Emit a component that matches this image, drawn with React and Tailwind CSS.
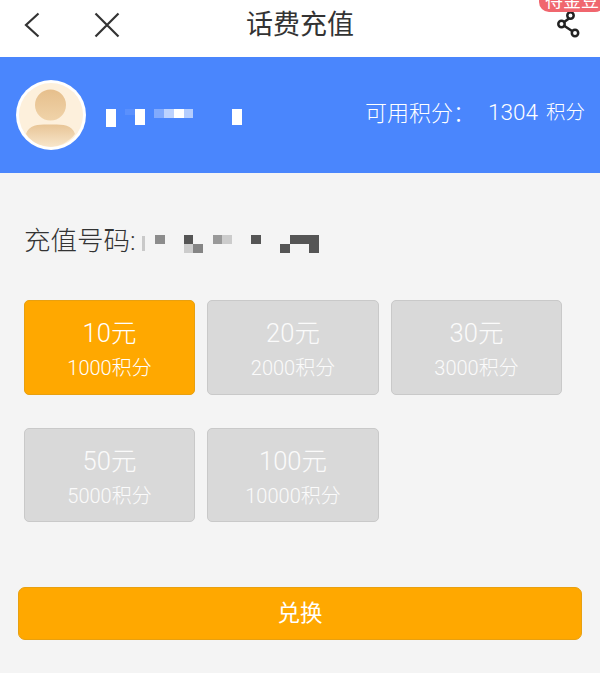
const font = { fontFamily: 'Roboto, "Noto Sans CJK SC", sans-serif' };

const options = [
    { price: '10元', points: '1000积分', active: true },
    { price: '20元', points: '2000积分' },
    { price: '30元', points: '3000积分' },
    { price: '50元', points: '5000积分' },
    { price: '100元', points: '10000积分' },
];

function BackIcon() {
    return (
        <svg width="16" height="26" viewBox="0 0 16 26" fill="none" stroke="#333" strokeWidth="2.200">
            <path d="M14.500 1.500 L2 13 L14.500 24.500" />
        </svg>
    );
}

function CloseIcon() {
    return (
        <svg width="26" height="26" viewBox="0 0 26 26" fill="none" stroke="#333" strokeWidth="2.200">
            <path d="M1.500 1.500 L24.500 24.500 M24.500 1.500 L1.500 24.500" />
        </svg>
    );
}

function Avatar() {
    return (
        <svg width="70" height="70" viewBox="0 0 70 70" className="shrink-0">
            <defs>
                <linearGradient id="head" x1="0" y1="0" x2="0" y2="1">
                    <stop offset="0" stopColor="#e6bf8c" />
                    <stop offset="1" stopColor="#f0d3a9" />
                </linearGradient>
                <linearGradient id="body" x1="0" y1="0" x2="0" y2="1">
                    <stop offset="0" stopColor="#e8c596" />
                    <stop offset="1" stopColor="#f8e6cb" />
                </linearGradient>
                <clipPath id="disc">
                    <circle cx="35" cy="35" r="32" />
                </clipPath>
            </defs>
            <circle cx="35" cy="35" r="35" fill="#fff" />
            <circle cx="35" cy="35" r="32" fill="#fdf0dc" />
            <circle cx="34.500" cy="25" r="15.500" fill="url(#head)" />
            <path d="M10 54 C13 44 24 44.500 34 44.500 C45 44.500 56 44 59 54 C52 63 42 67 34 67 C26 67 16 63 10 54Z" fill="url(#body)" clipPath="url(#disc)" />
        </svg>
    );
}

function NameMosaic() {
    return (
        <svg width="140" height="20" viewBox="0 0 140 20" className="ml-[20px] mt-[5px]">
            <rect x="0" y="1" width="10" height="18" fill="#fff" />
            <rect x="19" y="1" width="10" height="6" fill="#5a90fd" />
            <rect x="29" y="1" width="10" height="16" fill="#fff" />
            <rect x="48" y="1" width="10" height="9" fill="#81aafd" />
            <rect x="58" y="1" width="10" height="9" fill="#bcd2fe" />
            <rect x="68" y="1" width="10" height="9" fill="#fff" />
            <rect x="78" y="1" width="9" height="9" fill="#b4cdfe" />
            <rect x="126" y="1" width="10" height="16" fill="#fff" />
        </svg>
    );
}

function PhoneMosaic() {
    return (
        <svg width="180" height="20" viewBox="0 0 180 20" className="ml-[6px] mt-[6px]">
            <rect x="0" y="2" width="3" height="15" fill="#c9c9c9" />
            <rect x="13" y="1" width="10" height="9" fill="#8c8c8c" />
            <rect x="42" y="1" width="9" height="9" fill="#555" />
            <rect x="42" y="10" width="9" height="9" fill="#ccc" />
            <rect x="51" y="10" width="10" height="9" fill="#858585" />
            <rect x="71" y="1" width="9" height="9" fill="#999" />
            <rect x="80" y="1" width="10" height="9" fill="#ccc" />
            <rect x="109" y="1" width="10" height="9" fill="#555" />
            <rect x="138" y="10" width="10" height="9" fill="#555" />
            <rect x="148" y="1" width="29" height="9" fill="#555" />
            <rect x="167" y="10" width="10" height="9" fill="#555" />
        </svg>
    );
}

function ShareIcon() {
    return (
        <svg width="24" height="28" viewBox="0 0 24 28" fill="none" stroke="#222" strokeWidth="2.500">
            <path d="M15 6 L5.500 13 L19 22" />
            <circle cx="14.500" cy="4.500" r="3.200" fill="#fff" />
            <circle cx="5.500" cy="13" r="3.200" fill="#fff" />
            <circle cx="19" cy="22" r="3.200" fill="#fff" />
        </svg>
    );
}

function OptionCard({ price, points, active }) {
    return (
        <div
            className={`flex h-[94.5px] flex-col items-center rounded-[5px] border pt-[14px] font-light ${
                active
                    ? 'border-[#e8a010] bg-[#ffa800] text-white'
                    : 'border-[#c9c9c9] bg-[#d9d9d9] text-[#fbfbfb]'
            }`}
        >
            <span className="text-[25.5px] leading-[36px]">{price}</span>
            <span className="mt-[4px] text-[20px] leading-[26px]">{points}</span>
        </div>
    );
}

export default function App() {
    return (
        <div className="relative h-[673px] w-[600px] overflow-hidden bg-[#f4f4f4]" style={font}>
            <header className="relative flex h-[57px] items-center justify-between bg-white pb-[7px] pl-[24px] pr-[20px]">
                <div className="flex items-center gap-[54px]">
                    <BackIcon />
                    <CloseIcon />
                </div>
                <h1 className="absolute left-0 right-0 top-[6px] text-center text-[27px] leading-[38px] font-normal text-[#333]">
                    话费充值
                </h1>
                <ShareIcon />
                <span className="absolute right-[-5px] top-[-11px] h-[23px] w-[66px] rounded-[10px] bg-[#f0666e] text-center text-[18px] leading-[23px] text-white">
                    待金豆
                </span>
            </header>

            <section className="flex h-[116px] items-center justify-between bg-[#4a86fd] pl-[16px] pr-[15px] text-white">
                <div className="flex items-center">
                    <Avatar />
                    <NameMosaic />
                </div>
                <div className="flex items-center pb-[4px] font-light">
                    <span className="text-[22px]">可用积分：</span>
                    <span className="ml-[13px] text-[22.5px]">1304</span>
                    <span className="ml-[8px] text-[19.5px]">积分</span>
                </div>
            </section>

            <div className="flex items-center pl-[24px] pt-[48px]">
                <span className="text-[26.500px] leading-[40px] font-light text-[#333]">充值号码:</span>
                <PhoneMosaic />
            </div>

            <div className="ml-[24px] mt-[39px] grid w-[540px] grid-cols-[171px_172px_171px] gap-x-[12px] gap-y-[33px]">
                {options.map((item) => (
                    <OptionCard key={item.price} {...item} />
                ))}
            </div>

            <button className="ml-[18px] mt-[65px] block h-[53px] w-[564px] rounded-[7px] border border-[#e8a010] bg-[#ffa800] text-[22.5px] text-white">
                兑换
            </button>
        </div>
    );
}
